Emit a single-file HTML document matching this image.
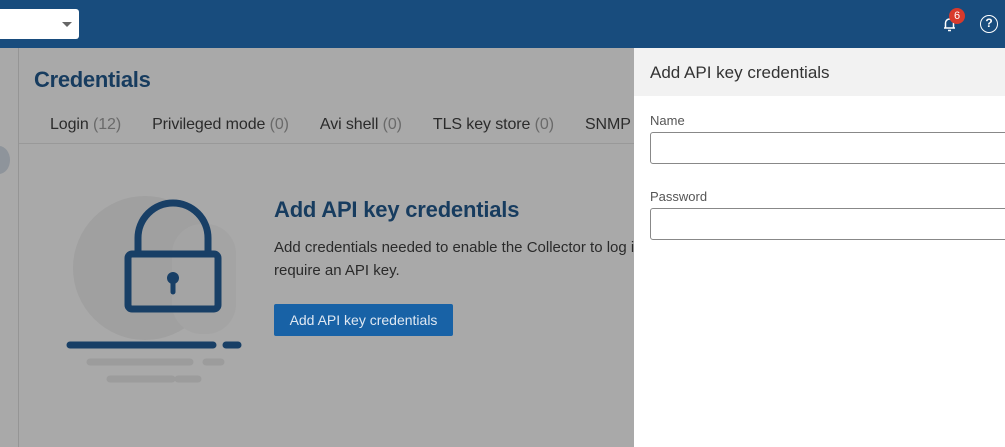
<!DOCTYPE html>
<html><head><style>
*{box-sizing:border-box;margin:0;padding:0}
body{width:1005px;height:447px;overflow:hidden;position:relative;font-family:"Liberation Sans",Roboto,sans-serif;background:#a9a9a9}
.hdr{position:absolute;left:0;top:0;width:1005px;height:48px;background:#184c7d}
.sel{position:absolute;left:0;top:9px;width:79px;height:30px;background:#fff;border-radius:0 3px 3px 0}
.sel:after{content:"";position:absolute;left:62px;top:13px;border:5px solid transparent;border-top:5px solid #666;border-bottom:0}
.side{position:absolute;left:18px;top:48px;width:1px;height:399px;background:#959595}
.dot{position:absolute;left:-12px;top:146px;width:22px;height:28px;border-radius:50%;background:#8e949b}
h1{position:absolute;left:34px;top:67px;font-size:22px;font-weight:bold;color:#173c5f;letter-spacing:-0.3px}
.tabs{position:absolute;left:50px;top:116px;font-size:16px;color:#2b2b2b;white-space:nowrap;letter-spacing:-0.1px}
.tabs span{margin-right:31px}.tabs i{font-style:normal;color:#6a6a6a}
.rule{position:absolute;left:19px;top:143px;width:620px;height:1px;background:#999}
.t2{position:absolute;left:274px;top:197px;font-size:22px;font-weight:bold;color:#173c5f;letter-spacing:-0.2px}
.p{position:absolute;left:274px;top:236px;font-size:15px;color:#2a2a2a;line-height:23px;width:420px}
.btn{position:absolute;left:274px;top:304px;width:179px;height:32px;background:#1862a6;color:#dfe8f2;font-size:14px;text-align:center;line-height:32px;border-radius:2px}
.panel{position:absolute;left:634px;top:48px;width:371px;height:399px;background:#fff}
.ph{height:48px;background:#f2f2f2;font-size:17px;color:#333;padding:15px 0 0 16px}
.lbl{position:absolute;left:16px;font-size:13px;color:#555}
.inp{position:absolute;left:16px;width:370px;height:32px;border:1px solid #888;border-radius:3px}
</style></head><body>
<div class="hdr"><div class="sel"></div>
<svg style="position:absolute;left:940px;top:14px" width="20" height="20" viewBox="0 0 20 20"><path d="M4 14h11M5.5 14V9a4 4 0 0 1 8 0v5M8 16.5h3" stroke="#fff" stroke-width="1.5" fill="none"/></svg>
<div style="position:absolute;left:949px;top:8px;width:16px;height:16px;border-radius:50%;background:#d83a2c;color:#fff;font-size:11px;text-align:center;line-height:16px">6</div>
<div style="position:absolute;left:980px;top:15px;width:18px;height:18px;border:1.5px solid #fff;border-radius:50%;color:#fff;font-size:12px;text-align:center;line-height:15px;font-weight:bold">?</div>
</div>
<div class="side"></div><div class="dot"></div>
<h1>Credentials</h1>
<div class="tabs"><span>Login <i>(12)</i></span><span>Privileged mode <i>(0)</i></span><span>Avi shell <i>(0)</i></span><span>TLS key store <i>(0)</i></span><span>SNMP</span></div>
<div class="rule"></div>
<svg style="position:absolute;left:60px;top:190px" width="190" height="200" viewBox="0 0 190 200">
<circle cx="85" cy="78" r="72" fill="#a0a0a0"/>
<rect x="112" y="34" width="64" height="110" rx="30" fill="#a4a4a4"/>
<path d="M78 64V48a35 35 0 0 1 70 0v16" stroke="#183f66" stroke-width="7" fill="none"/>
<rect x="68" y="64" width="90" height="55" rx="4" stroke="#183f66" stroke-width="7" fill="none"/>
<circle cx="113" cy="88" r="6" fill="#183f66"/><path d="M113 90v12" stroke="#183f66" stroke-width="5" stroke-linecap="round"/>
<path d="M10 155h143M166 155h12" stroke="#183f66" stroke-width="7" stroke-linecap="round"/>
<path d="M30 172h100M146 172h15M50 189h62M118 189h20" stroke="#9c9c9c" stroke-width="7" stroke-linecap="round"/>
</svg>
<div class="t2">Add API key credentials</div>
<div class="p">Add credentials needed to enable the Collector to log in to require an API key.</div>
<div class="btn">Add API key credentials</div>
<div class="panel"><div class="ph">Add API key credentials</div>
<div class="lbl" style="top:65px">Name</div><div class="inp" style="top:84px"></div>
<div class="lbl" style="top:141px">Password</div><div class="inp" style="top:160px"></div>
</div>
</body></html>
